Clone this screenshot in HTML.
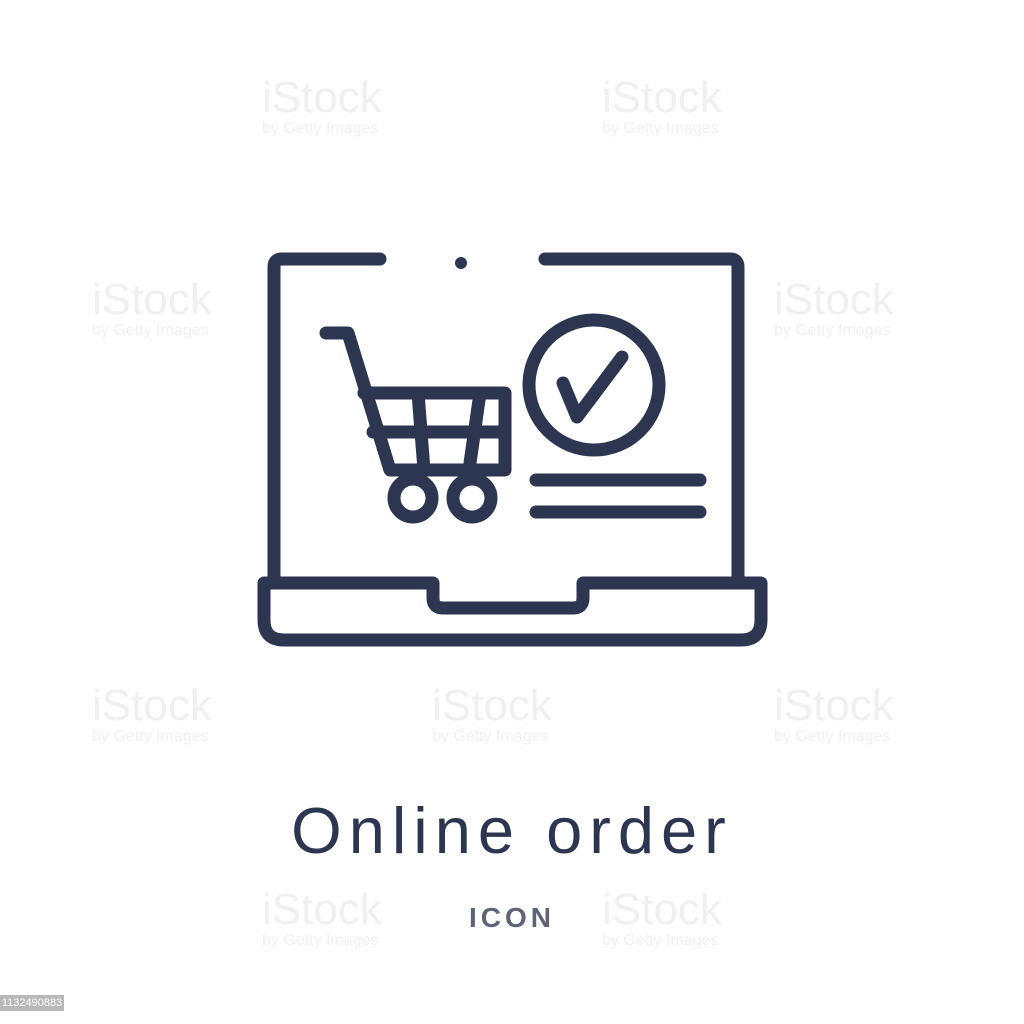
<!DOCTYPE html>
<html><head><meta charset="utf-8"><style>
html,body{margin:0;padding:0;background:#fff;}
body{width:1024px;height:1024px;position:relative;overflow:hidden;font-family:"Liberation Sans",sans-serif;}
.t{position:absolute;left:0;width:1024px;text-align:center;}
.wm{position:absolute;color:#f0f0f0;font-size:44px;line-height:44px;}
.wm small{display:block;font-size:16px;line-height:18px;}
</style></head><body>
<div class="wm" style="left:262px;top:76px">iStock<small>by Getty Images</small></div>
<div class="wm" style="left:602px;top:76px">iStock<small>by Getty Images</small></div>
<div class="wm" style="left:92px;top:278px">iStock<small>by Getty Images</small></div>
<div class="wm" style="left:774px;top:278px">iStock<small>by Getty Images</small></div>
<div class="wm" style="left:92px;top:684px">iStock<small>by Getty Images</small></div>
<div class="wm" style="left:432px;top:684px">iStock<small>by Getty Images</small></div>
<div class="wm" style="left:774px;top:684px">iStock<small>by Getty Images</small></div>
<div class="wm" style="left:262px;top:888px">iStock<small>by Getty Images</small></div>
<div class="wm" style="left:602px;top:888px">iStock<small>by Getty Images</small></div>
<svg width="1024" height="1024" style="position:absolute;left:0;top:0" fill="none" stroke="#2d3651" stroke-width="13" stroke-linecap="round" stroke-linejoin="round">
<path d="M380 259 H282 Q274 259 274 267 V577"/>
<path d="M545 259 H730 Q738 259 738 267 V577"/>
<circle cx="461" cy="263" r="6" fill="#2d3651" stroke="none"/>
<path d="M264 583 H433 V598 Q433 608 443 608 H573 Q583 608 583 598 V583 H761 V620 Q761 640 741 640 H284 Q264 640 264 620 Z"/>
<path d="M326 333 H348 L390 470 H505 V393 H364"/>
<path d="M373 432 H505"/>
<path d="M418 393 L424 470"/>
<path d="M480 393 L469 470"/>
<circle cx="413" cy="498" r="19"/>
<circle cx="472" cy="498" r="19"/>
<circle cx="594" cy="385" r="65"/>
<path d="M563 383 L577 417 L622 357"/>
<path d="M536 480 H700 M536 512 H700"/>
</svg>
<div class="t" style="top:794px;font-size:65px;line-height:74px;color:#2d3651;letter-spacing:7px;">Online order</div>
<div class="t" style="top:902px;font-size:28px;line-height:32px;color:#5f6377;font-weight:bold;letter-spacing:4px;">ICON</div>
<div style="position:absolute;left:0;top:995px;width:64px;height:16px;background:#b8b8b8;color:#fff;font-size:11px;line-height:16px;text-align:center;">1132490883</div>
</body></html>
